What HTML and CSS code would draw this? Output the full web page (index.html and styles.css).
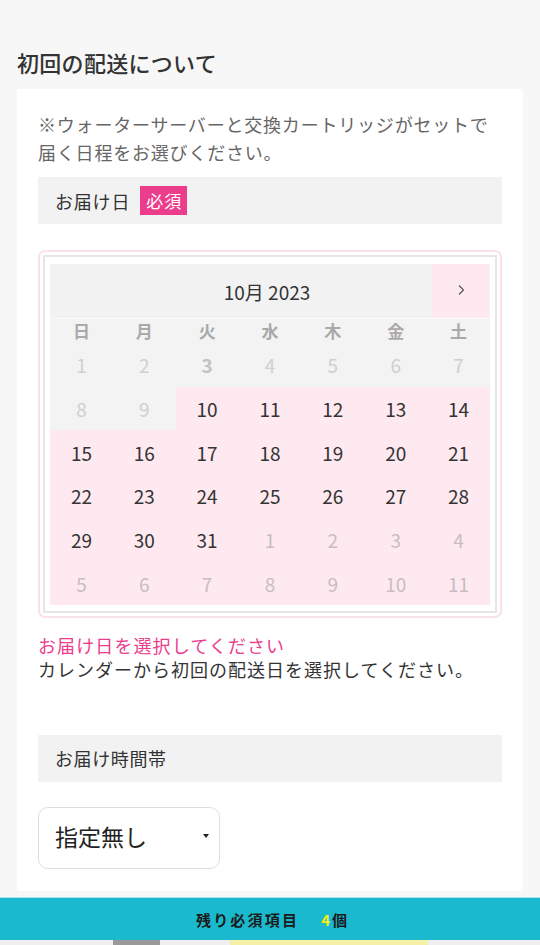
FILE: index.html
```html
<!DOCTYPE html>
<html lang="ja">
<head>
<meta charset="utf-8">
<link rel="stylesheet" href="styles.css">
</head>
<body>
<main class="page">
  <h2 class="section-title">初回の配送について</h2>
  <section class="card">
    <p class="note">※ウォーターサーバーと交換カートリッジがセットで届く日程をお選びください。</p>
    <div class="field-head">お届け日<span class="badge">必須</span></div>
    <div class="cal-outer">
      <div class="cal-inner">
        <div class="cal">
          <div class="cal-header">
            <div class="cal-title">10月 2023</div>
            <div class="cal-next">
              <svg width="10" height="14" viewBox="0 0 10 14"><path d="M3 2.5 L7.5 7 L3 11.5" fill="none" stroke="#555" stroke-width="1.2"/></svg>
            </div>
          </div>
          <div class="cal-week">
            <span>日</span><span>月</span><span>火</span><span>水</span><span>木</span><span>金</span><span>土</span>
          </div>
          <div class="cal-grid">
            <span class="d off">1</span><span class="d off">2</span><span class="d off today">3</span><span class="d off">4</span><span class="d off">5</span><span class="d off">6</span><span class="d off">7</span>
            <span class="d off">8</span><span class="d off">9</span><span class="d on">10</span><span class="d on">11</span><span class="d on">12</span><span class="d on">13</span><span class="d on">14</span>
            <span class="d on">15</span><span class="d on">16</span><span class="d on">17</span><span class="d on">18</span><span class="d on">19</span><span class="d on">20</span><span class="d on">21</span>
            <span class="d on">22</span><span class="d on">23</span><span class="d on">24</span><span class="d on">25</span><span class="d on">26</span><span class="d on">27</span><span class="d on">28</span>
            <span class="d on">29</span><span class="d on">30</span><span class="d on">31</span><span class="d next">1</span><span class="d next">2</span><span class="d next">3</span><span class="d next">4</span>
            <span class="d next">5</span><span class="d next">6</span><span class="d next">7</span><span class="d next">8</span><span class="d next">9</span><span class="d next">10</span><span class="d next">11</span>
          </div>
        </div>
      </div>
    </div>
    <p class="error">お届け日を選択してください</p>
    <p class="help">カレンダーから初回の配送日を選択してください。</p>
    <div class="field-head field-head--time">お届け時間帯</div>
    <div class="select">
      <span>指定無し</span>
      <svg width="6" height="4" viewBox="0 0 6 4"><path d="M0 0 H6 L3 4 Z" fill="#222"/></svg>
    </div>
  </section>
</main>
<footer class="footer">
  <div class="remain"><span class="remain-label">残り必須項目</span><span class="count">4</span><span>個</span></div>
  <div class="peek"><span class="peek-gray"></span><span class="peek-yellow"></span></div>
</footer>
</body>
</html>
```
FILE: styles.css
```css
* { box-sizing: border-box; }
html, body { margin: 0; padding: 0; }
body {
  background: #f7f7f7;
  font-family: "Noto Sans CJK JP", "Noto Sans", sans-serif;
  color: #333;
  width: 540px;
  height: 945px;
  overflow: hidden;
  display: flex;
  flex-direction: column;
}
.page {
  padding: 46px 17px 0;
  flex: 1;
  min-height: 0;
}
.section-title {
  margin: 0 0 11px;
  font-size: 22px;
  letter-spacing: 0.3px;
  font-weight: 500;
  line-height: 32px;
  color: #333;
}
.card {
  background: #fff;
  padding: 21px 21px 22px;
}
.note {
  margin: 0;
  font-size: 18px;
  letter-spacing: 0.8px;
  line-height: 28px;
  color: #666;
}
.field-head {
  margin-top: 11px;
  height: 47px;
  background: #f2f2f2;
  display: flex;
  align-items: center;
  padding-left: 17px;
  font-size: 18px;
  letter-spacing: 0.8px;
  color: #333;
}
.badge {
  margin-left: 10px;
  background: #ec3d8c;
  color: #fff;
  font-size: 17px;
  letter-spacing: 1px;
  line-height: 29px;
  padding: 0 5px 0 6px;
}
.cal-outer {
  margin-top: 26px;
  border: 2px solid #fbe1e8;
  border-radius: 7px;
  padding: 3px;
}
.cal-inner {
  border: 2px solid #e6e6e6;
  padding: 7px 5px 6px 5px;
}
.cal-header {
  height: 55px;
  display: flex;
  background: #f2f2f2;
  border-bottom: 1px solid #fafafa;
}
.cal-title {
  flex: 1;
  display: flex;
  align-items: center;
  justify-content: center;
  font-size: 19px;
  color: #333;
  padding-left: 52px;
}
.cal-next {
  width: 57px;
  margin-right: 1px;
  background: #fde9ef;
  display: flex;
  align-items: center;
  justify-content: center;
  padding-bottom: 2px;
}
.cal-week {
  display: grid;
  grid-template-columns: repeat(7, 1fr);
  background: #f3f3f3;
  height: 24px;
  font-size: 17px;
  font-weight: 700;
  color: #a9a9a9;
}
.cal-week span {
  text-align: center;
  line-height: 24px;
}
.cal-grid {
  display: grid;
  grid-template-columns: repeat(7, 1fr);
  grid-auto-rows: 43.67px;
}
.d {
  display: flex;
  align-items: center;
  justify-content: center;
  font-size: 19px;
}
.d.off { background: #f3f3f3; color: #cfcfcf; }
.d.off.today { font-weight: 700; color: #c2c2c2; }
.d.on { background: #fde9ef; color: #333; }
.d.next { background: #fde9ef; color: #c8bdc1; }
.error {
  margin: 15px 0 0;
  font-size: 18px;
  letter-spacing: 1.1px;
  line-height: 24px;
  color: #ec3d8c;
}
.help {
  margin: 0;
  font-size: 18px;
  letter-spacing: 1px;
  line-height: 24px;
  color: #333;
}
.field-head--time { margin-top: 54px; letter-spacing: 0.6px; }
.select {
  margin-top: 25px;
  width: 182px;
  height: 62px;
  border: 1px solid #dedede;
  border-radius: 10px;
  display: flex;
  align-items: center;
  justify-content: space-between;
  padding: 0 10px 4px 16px;
  font-size: 23px;
  color: #222;
}
.footer {
  flex: none;
}
.remain {
  height: 43px;
  background: #1bb9ce;
  border-top: 1px solid #a8e0ea;
  display: flex;
  align-items: center;
  justify-content: center;
  font-size: 15px;
  font-weight: 700;
  color: #1a1a1a;
  padding-left: 3px;
}
.remain-label { letter-spacing: 2.2px; margin-right: 22px; }
.count { color: #f3ec1b; margin-right: 2px; }
.peek {
  height: 5px;
  background: #efefef;
  display: flex;
}
.peek-gray { margin-left: 113px; width: 47px; background: #9a9a9a; }
.peek-yellow { margin-left: 70px; width: 198px; background: #f5f0a8; }
```
